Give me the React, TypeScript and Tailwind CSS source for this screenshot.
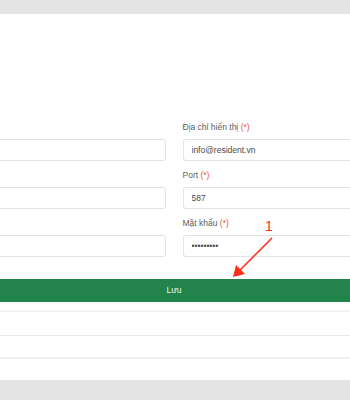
const fields = [
  { label: 'Địa chỉ hiển thị', value: 'info@resident.vn', type: 'text' },
  { label: 'Port', value: '587', type: 'text' },
  { label: 'Mật khẩu', value: '123456789', type: 'password' },
]

function Field({ label, value, type }: { label?: string; value?: string; type?: string }) {
  return (
    <div className="flex flex-col">
      <div className="h-[12px] mb-[6px] text-[8.5px] leading-[12px] text-[#5c5c5c] whitespace-nowrap">
        {label && (
          <>
            {label} <span className="text-[#f04a40]">(*)</span>
          </>
        )}
      </div>
      <input
        readOnly
        type={type ?? 'text'}
        value={value ?? ''}
        className="h-[22px] w-full rounded-[3px] border border-[#e3e3e3] bg-white px-[8px] text-[8.5px] text-[#4a4a4a] outline-none"
      />
    </div>
  )
}

export default function App() {
  return (
    <div
      className="relative w-[350px] h-[400px] overflow-hidden bg-[#e4e4e4] pt-[14px]"
      style={{ fontFamily: '"Liberation Sans", Arial, sans-serif' }}
    >
      <div className="h-[366px] bg-white pt-[107px]">
        <div className="-ml-[21px] w-[390px]">
          <div className="grid grid-cols-2 gap-x-[17px] gap-y-[8px]">
            {fields.map((f) => (
              <div key={f.label} className="contents">
                <Field />
                <Field label={f.label} value={f.value} type={f.type} />
              </div>
            ))}
          </div>

          <button className="mt-[22px] h-[23px] w-full bg-[#22844b] text-[8.5px] text-[#eef5f0]">
            Lưu
          </button>

          <div className="mt-[8px]">
            <div className="h-[26px] border-t-2 border-b border-t-[#f4f4f4] border-b-[#e6e6e6]" />
            <div className="h-[23px] border-b-2 border-[#f0f0f0]" />
            <div className="h-[20px]" />
          </div>
        </div>
      </div>

      {/* annotation */}
      <span className="absolute left-[265px] top-[217px] text-[14px] leading-[18px] text-[#ff2d1a]">1</span>
      <svg className="absolute left-0 top-0" width="350" height="400">
        <line x1="272" y1="238" x2="239" y2="271" stroke="#ff2d1a" strokeWidth="1.6" />
        <polygon points="233,277 236,265 245,274" fill="#ff2d1a" />
      </svg>
    </div>
  )
}
